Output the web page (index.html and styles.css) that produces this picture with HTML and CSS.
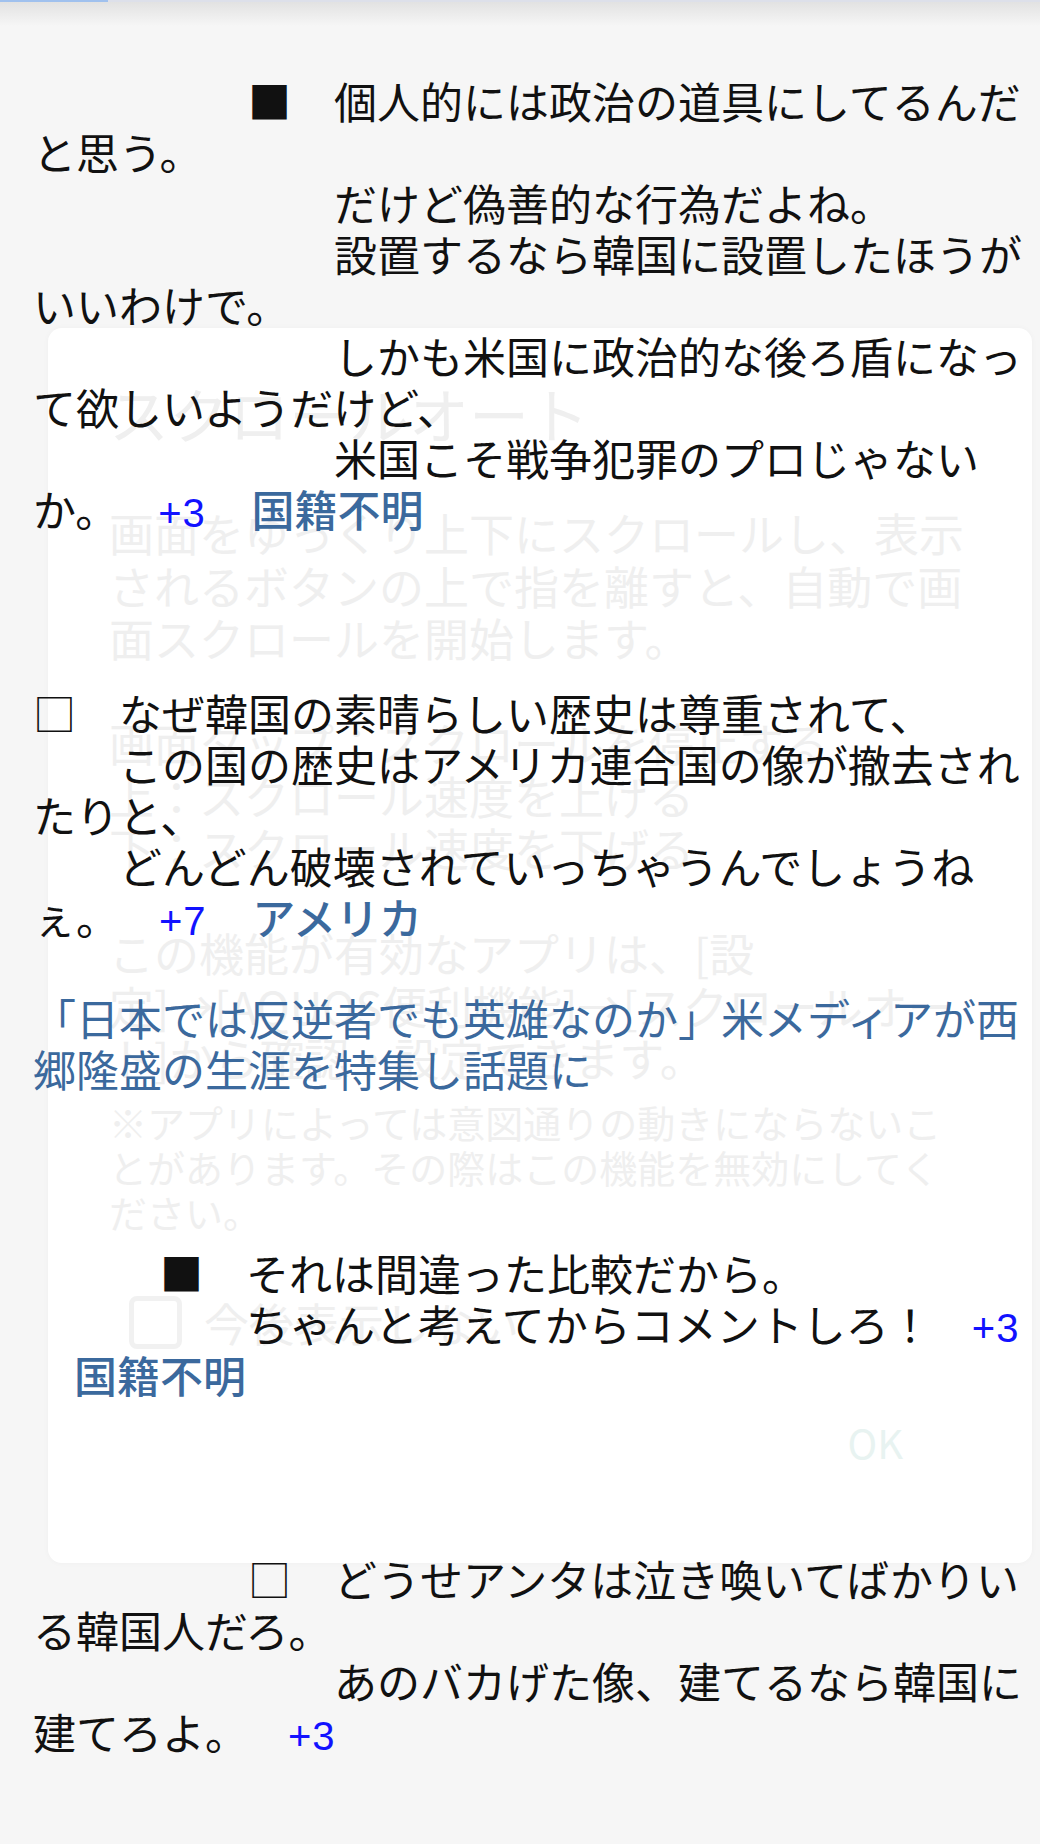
FILE: index.html
```html
<!DOCTYPE html>
<html lang="ja">
<head>
    <meta charset="UTF-8">
    <meta name="viewport" content="width=device-width, initial-scale=1.0">
    <title>コメント</title>
    <link rel="stylesheet" href="styles.css">
</head>
<body>
    <div class="progress"><div class="progress-fill"></div></div>
    <div class="progress-shade"></div>

    <!-- スクロールオートの案内（フェード中） -->
    <div class="popup">
        <h2 class="popup-title">スクロールオート</h2>
        <p class="popup-text">画面をゆっくり上下にスクロールし、表示されるボタンの上で指を離すと、自動で画面スクロールを開始します。</p>
        <p class="popup-text">画面タップ：スクロールを停止する<br>上：スクロール速度を上げる<br>下：スクロール速度を下げる</p>
        <p class="popup-text">この機能が有効なアプリは、[設<br>定]→[AQUOS便利機能]→[スクロールオー<br>ト]から確認・設定できます。</p>
        <p class="popup-note">※アプリによっては意図通りの動きにならないことがあります。その際はこの機能を無効にしてください。</p>
        <div class="popup-check">
            <span class="checkbox"></span>
            <span>今後表示しない</span>
        </div>
        <div class="popup-actions">
            <span class="popup-ok">OK</span>
        </div>
    </div>

    <main class="feed">
        <p class="comment">　　　　　■　個人的には政治の道具にしてるんだと思う。<br>　　　　　　　だけど偽善的な行為だよね。<br>　　　　　　　設置するなら韓国に設置したほうがいいわけで。<br>　　　　　　　しかも米国に政治的な後ろ盾になって欲しいようだけど、<br>　　　　　　　米国こそ戦争犯罪のプロじゃないか。<span class="vote">+3</span> <span class="country">国籍不明</span></p>

        <p class="comment comment-tight">□　なぜ韓国の素晴らしい歴史は尊重されて、<br>　　この国の歴史はアメリカ連合国の像が撤去されたりと、<br>　　どんどん破壊されていっちゃうんでしょうねぇ。<span class="vote">+7</span> <span class="country">アメリカ</span></p>

        <a class="related" href="#">「日本では反逆者でも英雄なのか」米メディアが西郷隆盛の生涯を特集し話題に</a>

        <p class="comment reply">　　■　それは間違った比較だから。<br>　　　　ちゃんと考えてからコメントしろ！<span class="vote">+3</span> <span class="country">国籍不明</span></p>

        <p class="comment">　　　　　□　どうせアンタは泣き喚いてばかりいる韓国人だろ。<br>　　　　　　　あのバカげた像、建てるなら韓国に建てろよ。<span class="vote">+3</span></p>
    </main>
</body>
</html>
```

FILE: styles.css
```css
body {
    margin: 0;
    background-color: #f6f6f6;
    font-family: "Noto Sans CJK JP", sans-serif;
    color: #111;
}

.progress {
    height: 2px;
    background-color: #dde0ea;
}

.progress-fill {
    width: 108px;
    height: 100%;
    background-color: #a0c1ee;
}

.progress-shade {
    height: 24px;
    background: linear-gradient(#e2e2e2, #f6f6f6);
}

/* 案内ポップアップ（ほぼ透明） */
.popup {
    position: absolute;
    top: 328px;
    left: 48px;
    width: 984px;
    height: 1235px;
    box-sizing: border-box;
    padding: 50px 62px 0 61px;
    background-color: #fff;
    border-radius: 14px;
    box-shadow: 0 0 6px rgba(0, 0, 0, 0.03);
    color: #efefef;
}

.popup-title {
    margin: 0;
    font-size: 60px;
    line-height: 70px;
    font-weight: 400;
}

.popup-text {
    margin: 52.5px 0 0;
    font-size: 45px;
    line-height: 52.5px;
}

.popup-title + .popup-text {
    margin-top: 59px;
}

.popup-note {
    margin: 14px 0 0;
    font-size: 38px;
    line-height: 45px;
}

.popup-check {
    display: flex;
    align-items: center;
    gap: 22px;
    margin-top: 62px;
    padding-left: 20px;
    font-size: 45px;
    line-height: 53px;
}

.checkbox {
    width: 53px;
    height: 53px;
    box-sizing: border-box;
    border: 5px solid #f1f1f1;
    border-radius: 8px;
}

.popup-actions {
    display: flex;
    justify-content: flex-end;
    margin-top: 68px;
    padding-right: 67px;
}

.popup-ok {
    font-size: 40px;
    line-height: 50px;
    color: #e8f3f1;
}

/* コメント一覧 */
.feed {
    position: relative;
    z-index: 1;
    padding: 49px 12px 40px 33px;
    font-size: 43px;
    line-height: 51px;
    line-break: normal;
    text-spacing-trim: space-all;
    word-spacing: 36px;
}

.comment {
    margin: 0 0 153px;
}

.comment:last-child,
.comment-tight {
    margin-bottom: 0;
}

.reply {
    padding-left: 41px;
}

.vote {
    margin-left: 40px;
    font-family: "Liberation Sans", Arial, sans-serif;
    font-size: 40px;
    line-height: 1;
    letter-spacing: 1px;
    word-spacing: 0;
    color: #1212ff;
}

.country {
    color: #3b699d;
    font-weight: 500;
}

.related {
    display: block;
    margin: 50px 0 153px;
    color: #3b699d;
    text-decoration: none;
}
```
